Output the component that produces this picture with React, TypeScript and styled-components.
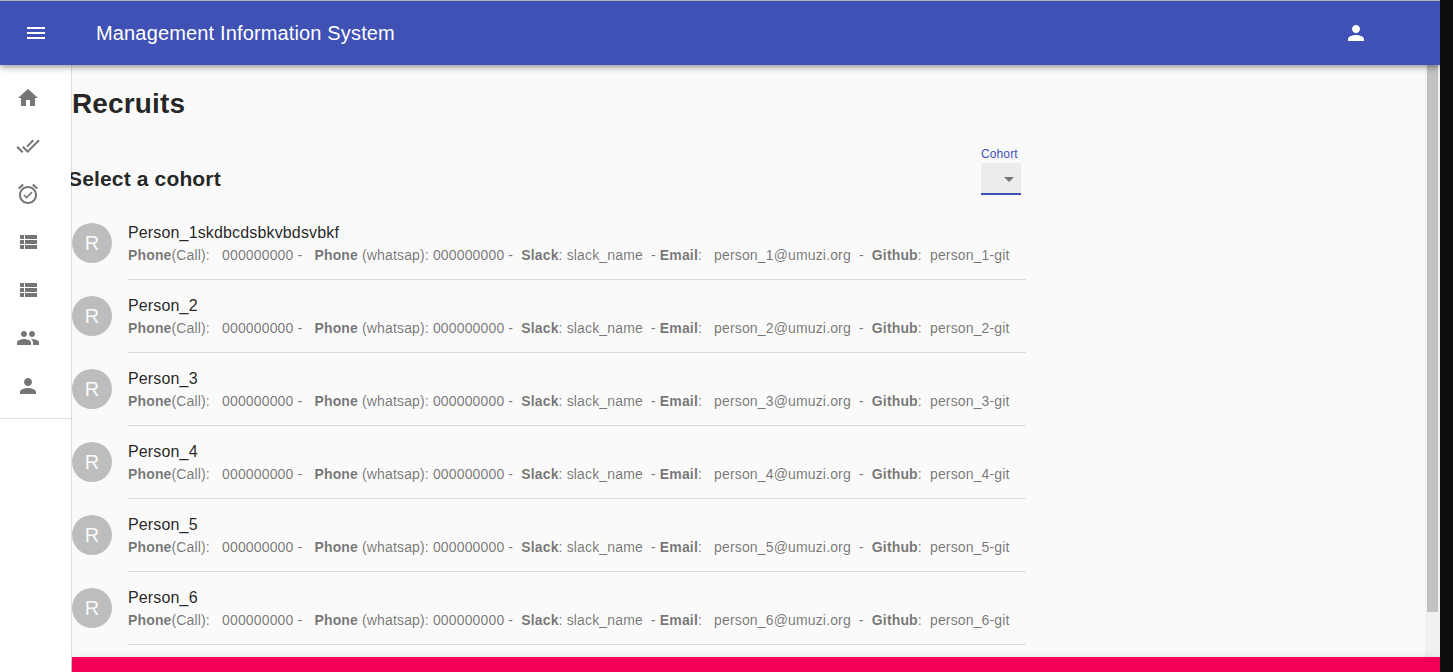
import React from "react";
import styled, { createGlobalStyle } from "styled-components";

const GlobalStyle = createGlobalStyle`
  *, *::before, *::after { box-sizing: border-box; }
  body {
    margin: 0;
    overflow: hidden;
    background: #fafafa;
    color: rgba(0, 0, 0, 0.87);
    font: 400 14px/1.43 "Liberation Sans", Arial, sans-serif;
    letter-spacing: 0.01071em;
  }
`;

const Screen = styled.div`
  display: grid;
  grid-template-columns: minmax(0, 1fr) 13px;
  height: 100vh;
`;

const DesktopEdge = styled.div`
  background: #0e0e0e;
`;

const Window = styled.div`
  display: flex;
  flex-direction: column;
  min-height: 0;
  overflow: hidden;
  border-top: 1px solid #b4b4b8;
`;

const AppBar = styled.header`
  position: relative;
  z-index: 3;
  display: flex;
  flex: none;
  align-items: center;
  height: 64px;
  padding: 0 72px 0 24px;
  background: #3f51b5;
  color: #fff;
  box-shadow: 0 2px 4px -1px rgba(0, 0, 0, 0.2), 0 4px 5px 0 rgba(0, 0, 0, 0.14),
    0 1px 10px 0 rgba(0, 0, 0, 0.12);
`;

const AppTitle = styled.h1`
  flex: 1;
  margin: 0 0 0 48px;
  font-size: 20px;
  font-weight: 400;
  line-height: 1.6;
  letter-spacing: 0.0075em;
`;

const IconButton = styled.button`
  display: flex;
  padding: 0;
  border: 0;
  background: none;
  color: inherit;
`;

const Body = styled.div`
  display: flex;
  flex: 1;
  min-height: 0;
`;

const Drawer = styled.nav`
  position: relative;
  z-index: 2;
  flex: none;
  width: 72px;
  background: #fff;
  background-clip: padding-box;
  border-right: 1px solid rgba(0, 0, 0, 0.12);
`;

const DrawerList = styled.ul`
  margin: 0;
  padding: 9px 0 8px;
  list-style: none;
  border-bottom: 1px solid #e0e0e0;
`;

const DrawerItem = styled.li`
  display: flex;
  align-items: center;
  height: 48px;
  padding-left: 16px;
  color: #757575;
`;

const Column = styled.div`
  display: flex;
  flex: 1;
  flex-direction: column;
  min-width: 0;
`;

const ScrollArea = styled.div`
  display: flex;
  flex: 1;
  min-height: 0;
`;

const Main = styled.main`
  flex: 1;
  min-width: 0;
`;

const PageHeading = styled.h1`
  margin: 18.76px 0 0;
  font-size: 28px;
  line-height: 40px;
  letter-spacing: 0.15px;
`;

const CohortBar = styled.div`
  display: flex;
  justify-content: space-between;
  width: 953px;
  height: 83px;
  margin-left: -4px;
  padding-top: 24px;
`;

const CohortHeading = styled.h2`
  margin: 16px 0 0;
  font-size: 21px;
  line-height: 30px;
  letter-spacing: 0.15px;
`;

const CohortField = styled.label`
  width: 40px;
  color: #3f51b5;
  font-size: 12px;
  line-height: 12px;
  letter-spacing: 0.11px;
`;

const SelectBox = styled.div`
  display: flex;
  align-items: center;
  justify-content: flex-end;
  height: 32px;
  margin-top: 3px;
  padding-top: 2px;
  background: #ececec;
  border-bottom: 2px solid #3f51b5;
  color: #757575;
`;

const RecruitList = styled.ul`
  width: 954px;
  margin: 0;
  padding: 0;
  list-style: none;
`;

const RecruitRow = styled.li`
  display: flex;
  height: 73px;
  padding-top: 8px;
`;

const Avatar = styled.div`
  display: flex;
  flex: none;
  align-items: center;
  justify-content: center;
  width: 40px;
  height: 40px;
  margin: 8px 16px 0 0;
  border-radius: 50%;
  background: #bdbdbd;
  color: #fafafa;
  font-size: 20px;
  line-height: 1;
`;

const RecruitText = styled.div`
  flex: 1;
  padding-top: 6px;
  border-bottom: 1px solid #dadada;
`;

const RecruitName = styled.div`
  font-size: 16px;
  line-height: 24px;
  letter-spacing: 0.00938em;
`;

const RecruitDetails = styled.div`
  color: rgba(0, 0, 0, 0.54);
  line-height: 20px;
  white-space: pre;
`;

const ScrollTrack = styled.div`
  flex: none;
  width: 15px;
  padding: 0 2px;
  background: #f1f1f1;
`;

const ScrollThumb = styled.div`
  width: 11px;
  height: 547px;
  background: #c1c1c1;
`;

const Footer = styled.footer`
  position: relative;
  z-index: 1;
  flex: none;
  height: 15px;
  background: #f50057;
  box-shadow: 0 2px 4px -1px rgba(0, 0, 0, 0.2), 0 4px 5px 0 rgba(0, 0, 0, 0.14),
    0 1px 10px 0 rgba(0, 0, 0, 0.12);
`;

const paths = {
  menu: "M3 18h18v-2H3v2zm0-5h18v-2H3v2zm0-7v2h18V6H3z",
  home: "M10 20v-6h4v6h5v-8h3L12 3 2 12h3v8z",
  doneAll:
    "M18 7l-1.41-1.41-6.34 6.34 1.41 1.41L18 7zm4.24-1.41L11.66 16.17 7.48 12l-1.41 1.41L11.66 19l12-12-1.42-1.41zM.41 13.41L6 19l1.41-1.41L1.83 12 .41 13.41z",
  alarmOn:
    "M22 5.72l-4.6-3.86-1.29 1.53 4.6 3.86L22 5.72zM7.88 3.39L6.6 1.86 2 5.71l1.29 1.53 4.59-3.85zM12 4c-4.97 0-9 4.03-9 9s4.02 9 9 9c4.97 0 9-4.03 9-9s-4.03-9-9-9zm0 16c-3.87 0-7-3.13-7-7s3.13-7 7-7 7 3.13 7 7-3.13 7-7 7zm-1.46-5.47L8.41 12.4l-1.06 1.06 3.18 3.18 6-6-1.06-1.06-4.93 4.95z",
  list: "M4 14h4v-4H4v4zm0 5h4v-4H4v4zM4 9h4V5H4v4zm5 5h12v-4H9v4zm0 5h12v-4H9v4zM9 5v4h12V5H9z",
  people:
    "M16 11c1.66 0 2.99-1.34 2.99-3S17.66 5 16 5c-1.66 0-3 1.34-3 3s1.34 3 3 3zm-8 0c1.66 0 2.99-1.34 2.99-3S9.66 5 8 5C6.34 5 5 6.34 5 8s1.34 3 3 3zm0 2c-2.33 0-7 1.17-7 3.5V19h14v-2.5c0-2.33-4.67-3.5-7-3.5zm8 0c-.29 0-.62.02-.97.05 1.16.84 1.97 1.97 1.97 3.45V19h6v-2.5c0-2.33-4.67-3.5-7-3.5z",
  person:
    "M12 12c2.21 0 4-1.79 4-4s-1.79-4-4-4-4 1.79-4 4 1.79 4 4 4zm0 2c-2.67 0-8 1.34-8 4v2h16v-2c0-2.66-5.33-4-8-4z",
  dropDown: "M7 10l5 5 5-5z",
};

type IconName = keyof typeof paths;

const Svg = styled.svg`
  display: block;
  width: 24px;
  height: 24px;
  fill: currentColor;
`;

const Icon = ({ name }: { name: IconName }) => (
  <Svg viewBox="0 0 24 24" aria-hidden="true">
    <path d={paths[name]} />
  </Svg>
);

const navIcons: IconName[] = ["home", "doneAll", "alarmOn", "list", "list", "people", "person"];

const recruits = [1, 2, 3, 4, 5, 6].map((id) => ({
  id,
  name: id === 1 ? "Person_1skdbcdsbkvbdsvbkf" : `Person_${id}`,
  phone: "000000000",
  slack: "slack_name",
  email: `person_${id}@umuzi.org`,
  github: `person_${id}-git`,
}));

export default function App() {
  return (
    <Screen>
      <GlobalStyle />
      <Window>
        <AppBar>
          <IconButton aria-label="Open menu">
            <Icon name="menu" />
          </IconButton>
          <AppTitle>Management Information System</AppTitle>
          <IconButton aria-label="Account">
            <Icon name="person" />
          </IconButton>
        </AppBar>
        <Body>
          <Drawer>
            <DrawerList>
              {navIcons.map((name, i) => (
                <DrawerItem key={i}>
                  <Icon name={name} />
                </DrawerItem>
              ))}
            </DrawerList>
          </Drawer>
          <Column>
            <ScrollArea>
              <Main>
                <PageHeading>Recruits</PageHeading>
                <CohortBar>
                  <CohortHeading>Select a cohort</CohortHeading>
                  <CohortField>
                    Cohort
                    <SelectBox>
                      <Icon name="dropDown" />
                    </SelectBox>
                  </CohortField>
                </CohortBar>
                <RecruitList>
                  {recruits.map((r) => (
                    <RecruitRow key={r.id}>
                      <Avatar>R</Avatar>
                      <RecruitText>
                        <RecruitName>{r.name}</RecruitName>
                        <RecruitDetails>
                          <b>Phone</b>{`(Call):   ${r.phone} -   `}
                          <b>Phone</b>{` (whatsap): ${r.phone} -  `}
                          <b>Slack</b>{`: ${r.slack}  - `}
                          <b>Email</b>{`:   ${r.email}  -  `}
                          <b>Github</b>{`:  ${r.github}`}
                        </RecruitDetails>
                      </RecruitText>
                    </RecruitRow>
                  ))}
                </RecruitList>
              </Main>
              <ScrollTrack>
                <ScrollThumb />
              </ScrollTrack>
            </ScrollArea>
            <Footer />
          </Column>
        </Body>
      </Window>
      <DesktopEdge />
    </Screen>
  );
}
